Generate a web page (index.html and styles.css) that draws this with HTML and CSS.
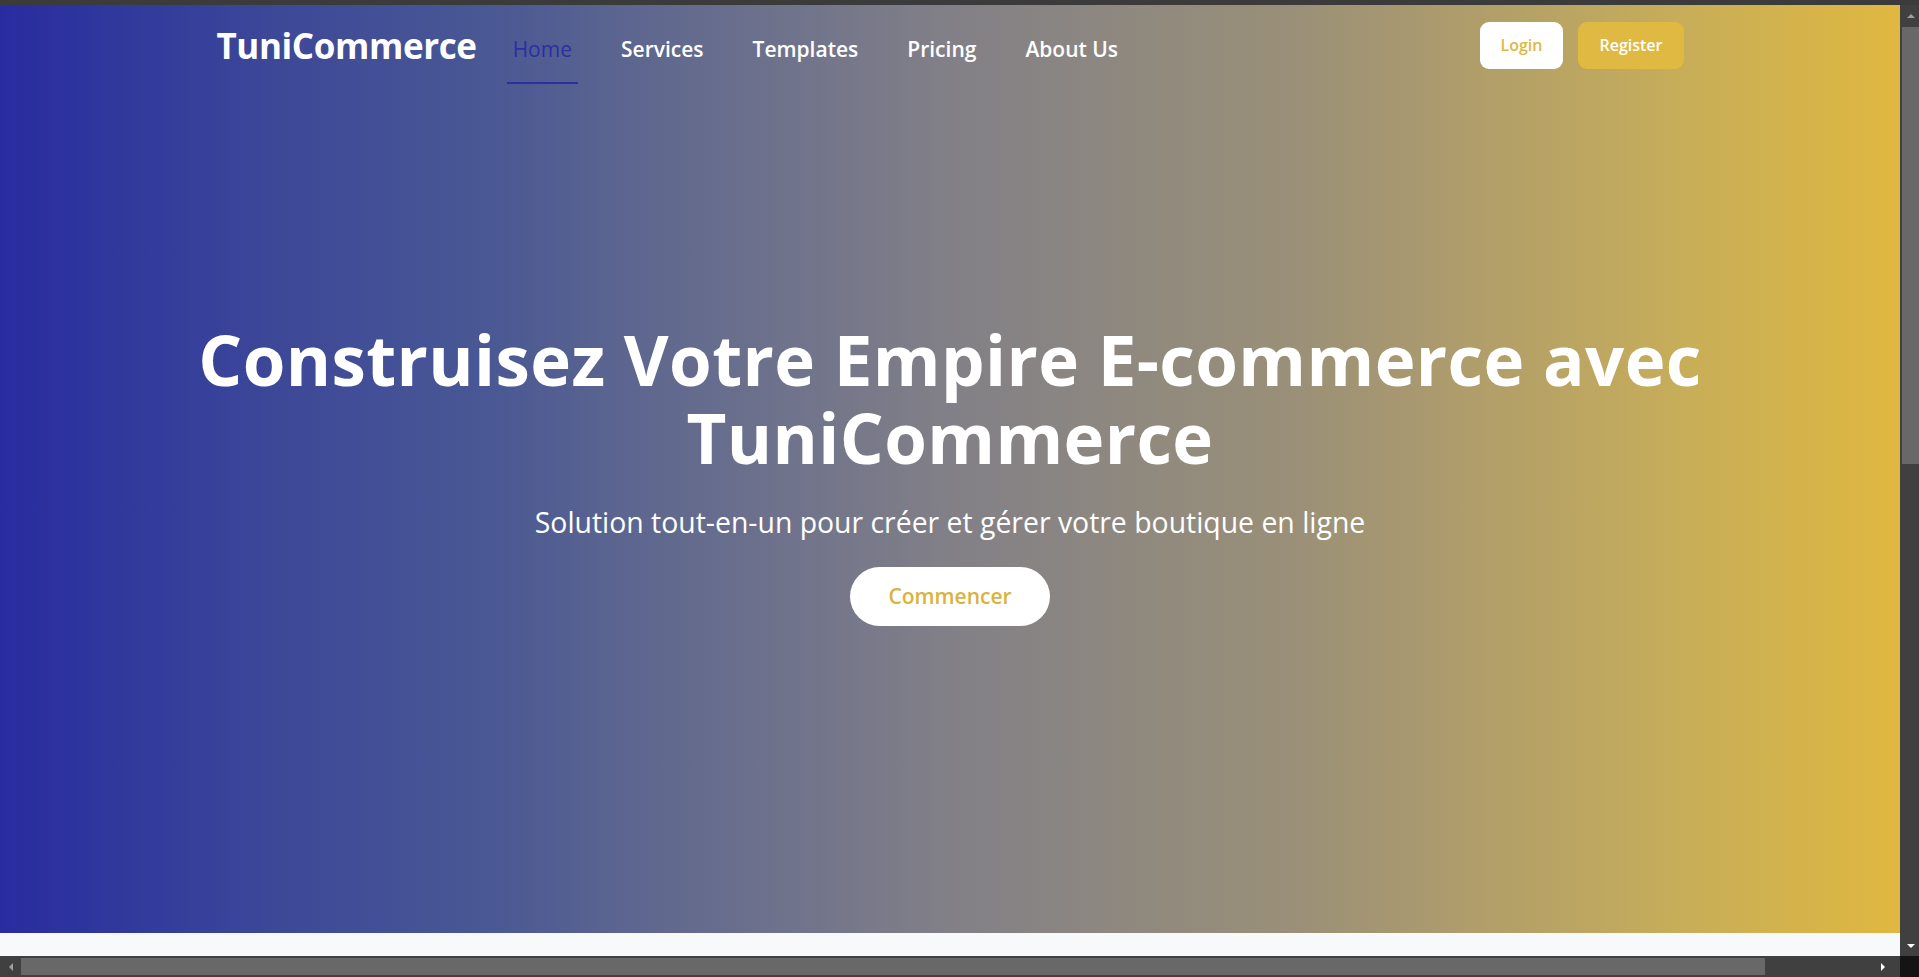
FILE: index.html
```html
<!DOCTYPE html>
<html lang="fr">
<head>
<meta charset="utf-8">
<title>TuniCommerce</title>
<link rel="stylesheet" href="styles.css">
</head>
<body>
<div class="window">
  <div class="topbar"></div>
  <div class="viewport-row">
    <div class="viewport">
      <section class="hero">
        <header class="site-header">
          <div class="header-inner">
            <a class="logo" href="#">TuniCommerce</a>
            <nav class="main-nav">
              <a class="nav-link active" href="#">Home</a>
              <a class="nav-link" href="#">Services</a>
              <a class="nav-link" href="#">Templates</a>
              <a class="nav-link" href="#">Pricing</a>
              <a class="nav-link" href="#">About Us</a>
            </nav>
            <div class="auth">
              <a class="btn btn-login" href="#">Login</a>
              <a class="btn btn-register" href="#">Register</a>
            </div>
          </div>
        </header>
        <div class="hero-content">
          <h1 class="hero-title">Construisez Votre Empire E-commerce avec<br>TuniCommerce</h1>
          <p class="hero-sub">Solution tout-en-un pour créer et gérer votre boutique en ligne</p>
          <a class="btn-cta" href="#">Commencer</a>
        </div>
      </section>
      <section class="next-section"></section>
    </div>
    <div class="vscroll">
      <div class="sb-btn"><span class="arrow-up"></span></div>
      <div class="vthumb"></div>
      <div class="vtrack"></div>
      <div class="sb-btn sb-btn-bottom"><span class="arrow-down"></span></div>
    </div>
  </div>
  <div class="hscroll-row">
    <div class="hscroll">
      <div class="hsb-btn"><span class="arrow-left"></span></div>
      <div class="hthumb"></div>
      <div class="htrack"></div>
      <div class="hsb-btn hsb-btn-right"><span class="arrow-right"></span></div>
    </div>
    <div class="corner"></div>
  </div>
</div>
</body>
</html>
```

FILE: styles.css
```css
* { box-sizing: border-box; }
html, body { margin: 0; padding: 0; }
body {
  font-family: "Open Sans", "Noto Sans", sans-serif;
  background: #3b3b3b;
  overflow: hidden;
}
a { text-decoration: none; }

.window {
  width: 1919px;
  height: 977px;
  display: grid;
  grid-template-rows: 5px 951px 21px;
}
.topbar { background: #3b3b3b; }

.viewport-row {
  display: grid;
  grid-template-columns: 1900px 19px;
  min-height: 0;
}
.viewport {
  overflow: hidden;
  background: #f8f9fa;
}

.hero {
  height: 928px;
  background: linear-gradient(to right,
    #282ca0 0%,
    #3c4798 14%,
    #4a5894 26%,
    #5a6490 32%,
    #828087 50%,
    #9a9078 68%,
    #a89870 74%,
    #c6ad5a 88%,
    #e0b840 100%);
  color: #fff;
}

.site-header { height: 84px; }
.header-inner {
  width: 1467px;
  margin: 0 auto;
  height: 100%;
  display: flex;
  align-items: center;
}
.logo {
  color: #fff;
  font-weight: 700;
  font-size: 35px;
  letter-spacing: -0.4px;
  line-height: 1;
  margin-right: 30px;
  margin-top: -3px;
}
.main-nav {
  display: flex;
  align-items: center;
  gap: 37px;
}
.nav-link {
  color: #fff;
  font-size: 21px;
  font-weight: 600;
  line-height: 28px;
  padding: 22px 6px 19px;
  border-bottom: 2px solid transparent;
  margin-top: 2px;
}
.nav-link.active {
  color: #2b2fa0;
  font-weight: 500;
  border-bottom-color: #2b2fa0;
}
.auth {
  margin-left: auto;
  display: flex;
  gap: 15px;
  align-items: center;
  margin-top: -4px;
}
.btn {
  font-size: 16px;
  font-weight: 600;
  line-height: 23px;
  padding: 12px 21px;
  border-radius: 9px;
}
.btn-login { background: #fff; color: #dfb842; }
.btn-register { background: #dfb942; color: #fff; }

.hero-content {
  margin-top: 231px;
  text-align: center;
}
.hero-title {
  margin: 0;
  font-size: 69px;
  font-weight: 700;
  line-height: 78px;
  letter-spacing: 0.4px;
}
.hero-sub {
  margin: 27px 0 25px;
  font-size: 28.4px;
  line-height: 39px;
  font-weight: 400;
}
.btn-cta {
  display: inline-block;
  background: #fff;
  color: #dbb23c;
  font-size: 21px;
  font-weight: 600;
  line-height: 29px;
  padding: 15px 38px;
  border-radius: 30px;
}

.next-section { height: 200px; background: #f8f9fa; }

/* fake scrollbars */
.vscroll {
  background: #404040;
  display: flex;
  flex-direction: column;
  padding-left: 2px;
}
.sb-btn {
  height: 22px;
  display: flex;
  align-items: center;
  justify-content: center;
}
.sb-btn-bottom { height: 20px; }
.vthumb { height: 437px; background: #686868; }
.vtrack { flex: 1; }
.arrow-up {
  width: 0; height: 0;
  border-left: 4px solid transparent;
  border-right: 4px solid transparent;
  border-bottom: 4px solid #9e9e9e;
}
.arrow-down {
  width: 0; height: 0;
  border-left: 4px solid transparent;
  border-right: 4px solid transparent;
  border-top: 4px solid #fff;
}

.hscroll-row {
  display: grid;
  grid-template-columns: 1900px 19px;
}
.hscroll {
  background: #404040;
  display: flex;
  padding: 2px 0;
}
.hsb-btn {
  width: 21px;
  display: flex;
  align-items: center;
  justify-content: center;
}
.hsb-btn-right { width: 25px; justify-content: flex-start; padding-left: 6px; }
.hthumb { width: 1744px; background: #686868; }
.htrack { flex: 1; }
.arrow-left {
  width: 0; height: 0;
  border-top: 4px solid transparent;
  border-bottom: 4px solid transparent;
  border-right: 4px solid #9e9e9e;
}
.arrow-right {
  width: 0; height: 0;
  border-top: 4px solid transparent;
  border-bottom: 4px solid transparent;
  border-left: 4px solid #fff;
}
.corner { background: #141414; }
```
